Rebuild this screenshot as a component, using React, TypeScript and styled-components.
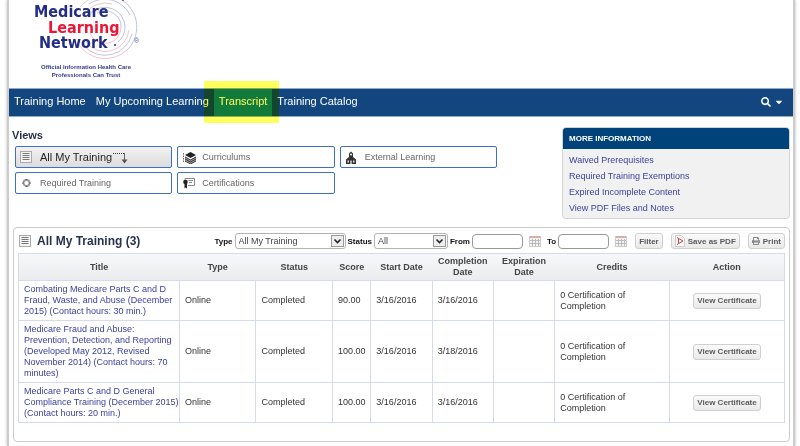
import React from "react";
import styled, { createGlobalStyle, css } from "styled-components";
import { FaSearch, FaCaretDown, FaPrint } from "react-icons/fa";

const GlobalStyle = createGlobalStyle`
  * { box-sizing: border-box; }
  html { overflow: hidden; }
  body { margin: 0; background: #fff; color: #333; font-family: "Liberation Sans", Arial, sans-serif; font-size: 9px; line-height: 11px; }
  button, input, select { font-family: inherit; margin: 0; }
  a { text-decoration: none; }
  svg { display: block; }
`;

const Page = styled.div`
  margin: 0 5px 0 7px;
  min-height: 100vh;
  border: solid #ccc;
  border-width: 0 2px;
  box-shadow: 0 0 3px #bbb;
`;

const Banner = styled.header`
  height: 88px;
  padding-left: 24px;
`;

const Nav = styled.nav`
  position: relative;
  display: flex;
  align-items: stretch;
  height: 29px;
  background: #13467e;
  border: solid #8fa9c8;
  border-width: 1px 0;
`;

const NavLink = styled.a<{ $active?: boolean }>`
  position: relative;
  display: flex;
  align-items: center;
  padding: 0 5px 2px;
  font-size: 11px;
  color: #fff;
  background: ${(p) => (p.$active ? "#127b9e" : "transparent")};
`;

const Marker = styled.span`
  position: absolute;
  z-index: 1;
  inset: -8px -7px -7px -10px;
  background: #ffff5e;
  mix-blend-mode: multiply;
  pointer-events: none;
`;

const SearchButton = styled.button`
  display: flex;
  align-items: center;
  gap: 3px;
  margin-left: auto;
  padding: 0 9px 2px;
  border: 0;
  background: none;
  color: #fff;
`;

const Intro = styled.div`
  display: flex;
  justify-content: space-between;
  gap: 65px;
  padding: 10px 3px 8px 3px;
`;

const Views = styled.section`
  flex: 1;
`;

const ViewsTitle = styled.h2`
  margin: 0 0 4px;
  padding-top: 1px;
  font-size: 11px;
  line-height: 14px;
  color: #1f2f4a;
`;

const ViewGrid = styled.div`
  display: grid;
  grid-template-columns: repeat(3, 1fr);
  gap: 4px 5px;
  margin-left: 3px;
`;

const ViewButton = styled.button<{ $active?: boolean }>`
  display: flex;
  align-items: center;
  height: 22px;
  padding: 0 4px;
  border: 1px solid #3f6fc0;
  border-radius: 2px;
  background: #fff;
  color: #666;
  font-size: 9px;
  text-align: left;
  ${(p) =>
    p.$active &&
    css`
      background: linear-gradient(#f2f2f2, #dcdcdc);
      color: #222;
      font-size: 11px;
    `}
`;

const IconSlot = styled.span`
  width: 20px;
  flex: none;
`;

const InfoCard = styled.aside`
  width: 228px;
  border: 1px solid #d4d4d4;
  border-radius: 4px;
  overflow: hidden;
  background: #f1f1f1;
`;

const InfoTitle = styled.h3`
  margin: 0;
  padding: 0 6px;
  background: #00427a;
  color: #fff;
  font-size: 8px;
  line-height: 21px;
`;

const InfoList = styled.ul`
  margin: 0;
  padding: 3px 6px 2px;
  list-style: none;
  line-height: 16px;
`;

const Link = styled.a`
  color: #3a3f9c;
`;

const Panel = styled.section`
  margin: 0 3px 4px 4px;
  padding: 4px 4px 18px;
  border: 1px solid #ccc;
  border-radius: 4px;
`;

const Toolbar = styled.div`
  display: flex;
  align-items: center;
  height: 21px;
  padding-bottom: 3px;
`;

const PanelTitle = styled.h2`
  display: flex;
  align-items: center;
  gap: 6px;
  flex: 1;
  margin: 0;
  padding-left: 1px;
  color: #26344f;
  font-size: 12px;
  line-height: 16px;
  white-space: nowrap;
`;

const Field = styled.div`
  display: flex;
  align-items: center;
  gap: 2px;
  margin-right: 2px;
`;

const Label = styled.label`
  color: #111;
  font-size: 8px;
  font-weight: bold;
`;

const SelectWrap = styled.span<{ $width: number }>`
  position: relative;
  width: ${(p) => p.$width}px;
  height: 16px;
`;

const Select = styled.select`
  appearance: none;
  width: 100%;
  height: 16px;
  padding: 0 3px;
  border: 1px solid #b4b4b4;
  border-radius: 3px;
  background: #fff;
  color: #444;
  font-size: 9px;
`;

const SelectArrow = styled.span`
  position: absolute;
  top: 2px;
  right: 2px;
  width: 13px;
  height: 12px;
  border: 1px solid #999;
  background: #eee;
  pointer-events: none;
`;

const DateInput = styled.input`
  width: 51px;
  height: 15px;
  padding: 0 3px;
  border: 1px solid #999;
  border-radius: 4px;
  font-size: 9px;
`;

const IconButton = styled.button`
  padding: 0 4px;
  border: 0;
  background: none;
`;

const Button = styled.button`
  display: inline-flex;
  align-items: center;
  gap: 3px;
  height: 16px;
  padding: 0 3px;
  border: 1px solid #d0d0d0;
  border-radius: 3px;
  background: linear-gradient(#fafafa, #e9e9e9);
  color: #5a5a5a;
  font-size: 8px;
  font-weight: bold;
  white-space: nowrap;
`;

const Actions = styled.div`
  display: flex;
  gap: 8px;
  margin-left: 2px;
`;

const Table = styled.table`
  width: 100%;
  table-layout: fixed;
  border-collapse: collapse;
  border: 1px solid #d5dbea;
`;

const Col = styled.col<{ $share: number }>`
  width: ${(p) => p.$share}%;
`;

const Th = styled.th`
  height: 27px;
  padding: 0 4px;
  color: #444;
  font-size: 9px;
  line-height: 11px;
`;

const HeadRow = styled.tr`
  background: linear-gradient(#f7f8f9, #e9ebed);
`;

const Td = styled.td<{ $center?: boolean }>`
  padding: ${(p) => (p.$center ? "3px 0" : "3px 0 3px 5px")};
  border: 1px solid #d5dbea;
  vertical-align: middle;
  text-align: ${(p) => (p.$center ? "center" : "left")};
`;

const Credits = styled.span`
  display: block;
  max-width: 72px;
`;

const Logo = () => (
  <svg width="112" height="84" viewBox="33 0 112 84" role="img" aria-label="Medicare Learning Network">
    <g fill="none" strokeWidth="0.7">
      <g stroke="#f3a9b0">
        <path d="M127 50A32 32 0 0 1 79 45" />
        <path d="M129 30A24 24 0 0 1 86 42M85 14A24 24 0 0 1 112 4" />
        <path d="M80 7A32 32 0 0 1 98 -4" />
        <path d="M121 28A16 16 0 0 1 90 33" />
      </g>
      <g stroke="#a3aad4">
        <path d="M116 -3A32 32 0 0 1 127 50" />
        <path d="M84 46A28 28 0 0 0 132 34M89 4A28 28 0 0 1 130 15" />
        <path d="M91 13A20 20 0 0 1 125 27A20 20 0 0 1 118 42" />
        <path d="M97 13A16 16 0 0 1 121 28" />
      </g>
    </g>
    <circle cx="123" cy="0" r="1" fill="#e9163a" />
    <circle cx="115" cy="45" r="1" fill="#232d85" />
    <g fontFamily='"DejaVu Sans Condensed", "DejaVu Sans", sans-serif' fontWeight="bold" fontSize="16">
      <text x="34" y="17" fill="#232d85">Medicare</text>
      <text x="48" y="33" fill="#ee1635">Learning</text>
      <text x="39" y="48" fill="#232d85">Network</text>
    </g>
    <text x="134" y="43" fontSize="7" fill="#5c649f">®</text>
    <g fontFamily='"Liberation Sans Narrow", "Liberation Sans", sans-serif' fontWeight="bold" fontSize="6" fill="#333b8c" textAnchor="middle">
      <text x="86" y="69">Official Information Health Care</text>
      <text x="86" y="77">Professionals Can Trust</text>
    </g>
  </svg>
);

const ListIcon = () => (
  <svg width="12" height="12" viewBox="0 0 12 12">
    <rect x="0.5" y="0.5" width="11" height="11" fill="#f4f4f4" stroke="#aaa" />
    <path d="M2.5 2.5h7M2.5 4.5h7M2.5 6.5h7M2.5 8.5h7" stroke="#777" />
  </svg>
);

const RingIcon = () => (
  <svg width="12" height="12" viewBox="0 0 12 12">
    <circle cx="6.5" cy="6" r="3" fill="none" stroke="#999" strokeWidth="1.8" />
    <path d="M6.5 2v1M6.5 9v1M2.500 6h1M9.500 6h1" stroke="#555" strokeWidth="1.6" />
  </svg>
);

const StackIcon = () => (
  <svg width="14" height="13" viewBox="0 0 14 13">
    <path d="M1.5 2v10" stroke="#666" strokeDasharray="1.5 1" />
    <path d="M3 4 8.5 1 14 4 8.5 7Z" fill="#222" />
    <path d="M3 5.5 8.5 8.500 14 5.500V10l-5.500 3L3 10Z" fill="#999" />
    <path d="M3 6 8.500 9 14 6M3 8 8.500 11 14 8M3 10l5.500 3 5.500-3" fill="none" stroke="#333" strokeWidth="0.9" />
  </svg>
);

const CertificateIcon = () => (
  <svg width="14" height="12" viewBox="0 0 14 12">
    <path d="M3 3V1.5h9.500v7H6" fill="none" stroke="#888" />
    <path d="M6.500 3.500h4.500M7 5.500h3" stroke="#888" />
    <circle cx="3.500" cy="5" r="2.300" fill="#222" />
    <path d="M2.500 7v4.500l1-1 1.500 1V7Z" fill="#222" />
  </svg>
);

const SchoolIcon = () => (
  <svg width="12" height="13" viewBox="0 0 12 13">
    <path d="M4 6V2.500L6 0.500l2 2V6l3 2.500V13H1V8.500Z" fill="#333" />
    <circle cx="6" cy="3.500" r="1" fill="#fff" />
    <path d="M2.500 9.500h1.500v2H2.500ZM8 9.500h1.500v2H8ZM5.300 9.500h1.400V13H5.300Z" fill="#ddd" />
  </svg>
);

const TurnArrow = () => (
  <svg width="17" height="14" viewBox="0 0 17 14">
    <path d="M1 3.5h12" stroke="#333" strokeDasharray="1 1" />
    <path d="M12.5 3v7" stroke="#666" />
    <path d="M9.500 9.500h6l-3 4Z" fill="#555" />
  </svg>
);

const CalendarIcon = () => (
  <svg width="12" height="12" viewBox="0 0 12 12">
    <rect x="0.5" y="1.5" width="11" height="10" fill="#f3f3f3" stroke="#ccc" />
    <path d="M1 2h10" stroke="#d8b0a2" strokeWidth="2" />
    <path d="M1 5.5h10M1 8.5h10M3.5 4v7M6.5 4v7M9.5 4v7" stroke="#bbb" />
  </svg>
);

const PdfIcon = () => (
  <svg width="10" height="12" viewBox="0 0 10 12">
    <path d="M0.5 0.5h6l3 3v8h-9Z" fill="#fafafa" stroke="#ccc" />
    <path d="M2 2.500 8 6 2 9.500M3.500 3.500v5" fill="none" stroke="#c8464b" />
  </svg>
);

const Dropdown = ({ id, width, value }: { id: string; width: number; value: string }) => (
  <SelectWrap $width={width}>
    <Select id={id}>
      <option>{value}</option>
    </Select>
    <SelectArrow>
      <svg width="11" height="10" viewBox="0 0 11 10">
        <path d="M2.5 3.5l3 3 3-3" fill="none" stroke="#222" strokeWidth="1.6" />
      </svg>
    </SelectArrow>
  </SelectWrap>
);

const views = [
  { name: "All My Training", icon: <ListIcon />, active: true },
  { name: "Curriculums", icon: <StackIcon /> },
  { name: "External Learning", icon: <SchoolIcon /> },
  { name: "Required Training", icon: <RingIcon /> },
  { name: "Certifications", icon: <CertificateIcon /> },
];

const infoLinks = ["Waived Prerequisites", "Required Training Exemptions", "Expired Incomplete Content", "View PDF Files and Notes"];

const columns = [
  ["Title", 21],
  ["Type", 10],
  ["Status", 10],
  ["Score", 5],
  ["Start Date", 8],
  ["Completion Date", 8],
  ["Expiration Date", 8],
  ["Credits", 15],
  ["Action", 15],
] as const;

const rows = [
  { title: "Combating Medicare Parts C and D Fraud, Waste, and Abuse (December 2015) (Contact hours: 30 min.)", score: "90.00", start: "3/16/2016", end: "3/16/2016" },
  { title: "Medicare Fraud and Abuse: Prevention, Detection, and Reporting (Developed May 2012, Revised November 2014) (Contact hours: 70 minutes)", score: "100.00", start: "3/16/2016", end: "3/18/2016" },
  { title: "Medicare Parts C and D General Compliance Training (December 2015) (Contact hours: 20 min.)", score: "100.00", start: "3/16/2016", end: "3/16/2016" },
];

export default function App() {
  return (
    <>
      <GlobalStyle />
      <Page>
        <Banner>
          <Logo />
        </Banner>
        <Nav>
          <NavLink href="#home">Training Home</NavLink>
          <NavLink href="#upcoming">My Upcoming Learning</NavLink>
          <NavLink href="#transcript" $active>
            Transcript
            <Marker />
          </NavLink>
          <NavLink href="#catalog">Training Catalog</NavLink>
          <SearchButton aria-label="Search">
            <FaSearch size={10} />
            <FaCaretDown size={10} />
          </SearchButton>
        </Nav>
        <Intro>
          <Views>
            <ViewsTitle>Views</ViewsTitle>
            <ViewGrid>
              {views.map((v) => (
                <ViewButton key={v.name} $active={v.active}>
                  <IconSlot>{v.icon}</IconSlot>
                  {v.name}
                  {v.active && <TurnArrow />}
                </ViewButton>
              ))}
            </ViewGrid>
          </Views>
          <InfoCard>
            <InfoTitle>MORE INFORMATION</InfoTitle>
            <InfoList>
              {infoLinks.map((text) => (
                <li key={text}>
                  <Link href="#info">{text}</Link>
                </li>
              ))}
            </InfoList>
          </InfoCard>
        </Intro>
        <Panel>
          <Toolbar>
            <PanelTitle>
              <ListIcon />
              All My Training (3)
            </PanelTitle>
            <Field>
              <Label htmlFor="type">Type</Label>
              <Dropdown id="type" width={111} value="All My Training" />
            </Field>
            <Field>
              <Label htmlFor="status">Status</Label>
              <Dropdown id="status" width={74} value="All" />
            </Field>
            <Field>
              <Label htmlFor="from">From</Label>
              <DateInput id="from" type="text" />
              <IconButton aria-label="Pick start date">
                <CalendarIcon />
              </IconButton>
            </Field>
            <Field>
              <Label htmlFor="to">To</Label>
              <DateInput id="to" type="text" />
              <IconButton aria-label="Pick end date">
                <CalendarIcon />
              </IconButton>
            </Field>
            <Actions>
              <Button>Filter</Button>
              <Button>
                <PdfIcon />
                Save as PDF
              </Button>
              <Button>
                <FaPrint size={8} color="#888" />
                Print
              </Button>
            </Actions>
          </Toolbar>
          <Table>
            <colgroup>
              {columns.map(([name, share]) => (
                <Col key={name} $share={share} />
              ))}
            </colgroup>
            <thead>
              <HeadRow>
                {columns.map(([name]) => (
                  <Th key={name} scope="col">
                    {name}
                  </Th>
                ))}
              </HeadRow>
            </thead>
            <tbody>
              {rows.map((r) => (
                <tr key={r.title}>
                  <Td>
                    <Link href="#course">{r.title}</Link>
                  </Td>
                  <Td>Online</Td>
                  <Td>Completed</Td>
                  <Td>{r.score}</Td>
                  <Td>{r.start}</Td>
                  <Td>{r.end}</Td>
                  <Td />
                  <Td>
                    <Credits>0 Certification of Completion</Credits>
                  </Td>
                  <Td $center>
                    <Button>View Certificate</Button>
                  </Td>
                </tr>
              ))}
            </tbody>
          </Table>
        </Panel>
      </Page>
    </>
  );
}
